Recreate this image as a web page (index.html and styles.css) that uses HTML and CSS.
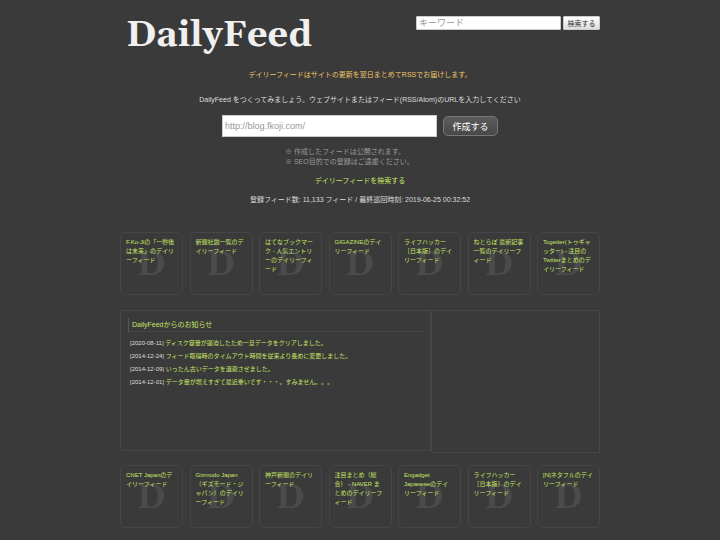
FILE: index.html
```
<!DOCTYPE html>
<html lang="ja">
<head>
    <meta charset="UTF-8">
    <meta name="viewport" content="width=device-width, initial-scale=1.0">
    <title>DailyFeed</title>
    <link rel="stylesheet" href="styles.css">
</head>
<body>
    <div class="container">
        <header class="header">
            <h1 class="logo"><a href="#">DailyFeed</a></h1>
            <form class="search-form">
                <input type="text" class="search-input" name="q" placeholder="キーワード" aria-label="キーワード">
                <button type="submit" class="search-btn">検索する</button>
            </form>
        </header>

        <main>
            <p class="tagline">デイリーフィードはサイトの更新を翌日まとめてRSSでお届けします。</p>

            <!-- Feed creation -->
            <section class="create">
                <p><label for="url">DailyFeed をつくってみましょう。ウェブサイトまたはフィード(RSS/Atom)のURLを入力してください</label></p>
                <form class="create-form">
                    <input type="text" class="url-input" id="url" name="url" placeholder="http://blog.fkoji.com/">
                    <button type="submit" class="create-btn">作成する</button>
                </form>
                <ul class="notes">
                    <li>※ 作成したフィードは公開されます。</li>
                    <li>※ SEO目的での登録はご遠慮ください。</li>
                </ul>
                <p class="info"><a href="#">デイリーフィードを検索する</a></p>
                <p class="info">登録フィード数: 11,133 フィード / 最終巡回時刻: 2019-06-25 00:32:52</p>
            </section>

            <ul class="feeds">
                <li><a href="#">F.Ko-Jiの「一秒後は未来」のデイリーフィード</a></li>
                <li><a href="#">新聞社説一覧のデイリーフィード</a></li>
                <li><a href="#">はてなブックマーク - 人気エントリーのデイリーフィード</a></li>
                <li><a href="#">GIGAZINEのデイリーフィード</a></li>
                <li><a href="#">ライフハッカー［日本版］のデイリーフィード</a></li>
                <li><a href="#">ねとらぼ 最新記事一覧のデイリーフィード</a></li>
                <li><a href="#">Togetter(トゥギャッター) - 注目のTwitterまとめのデイリーフィード</a></li>
            </ul>

            <div class="panels">
                <section class="news">
                    <h2><a href="#">DailyFeedからのお知らせ</a></h2>
                    <ul>
                        <li>[2020-08-11] <a href="#">ディスク容量が逼迫したため一旦データをクリアしました。</a></li>
                        <li>[2014-12-24] <a href="#">フィード取得時のタイムアウト時間を従来より長めに変更しました。</a></li>
                        <li>[2014-12-09] <a href="#">いったん古いデータを退避させました。</a></li>
                        <li>[2014-12-01] <a href="#">データ量が増えすぎて最近重いです・・・。すみません。。。</a></li>
                    </ul>
                </section>
                <aside class="side"></aside>
            </div>

            <ul class="feeds">
                <li><a href="#">CNET Japanのデイリーフィード</a></li>
                <li><a href="#">Gizmodo Japan（ギズモード・ジャパン）のデイリーフィード</a></li>
                <li><a href="#">神戸新聞のデイリーフィード</a></li>
                <li><a href="#">注目まとめ（総合） - NAVER まとめのデイリーフィード</a></li>
                <li><a href="#">Engadget Japaneseのデイリーフィード</a></li>
                <li><a href="#">ライフハッカー［日本版］のデイリーフィード</a></li>
                <li><a href="#">[N]ネタフルのデイリーフィード</a></li>
            </ul>
        </main>
    </div>
</body>
</html>
```
FILE: styles.css
```
:root {
    --bg-color: #3a3a3a;
    --text-color: #dddddd;
    --link-color: #c8e664;
    --border-color: #464646;
}

* {
    box-sizing: border-box;
}

body {
    margin: 0;
    background-color: var(--bg-color);
    color: var(--text-color);
    font-family: "Liberation Sans", Arial, "Noto Sans CJK JP", sans-serif;
    font-size: 7px;
    line-height: 10px;
    text-spacing-trim: space-all;
}

h1, h2, p, ul {
    margin: 0;
    padding: 0;
}

ul {
    list-style: none;
}

a {
    color: var(--link-color);
    text-decoration: none;
}

input, button {
    font-family: inherit;
    margin: 0;
}

input::placeholder {
    color: #999999;
}

.container {
    width: 67%;
    max-width: 480px;
    margin: 0 auto;
    padding-bottom: 12px;
}

/* Header */
.header {
    display: flex;
    justify-content: space-between;
    align-items: flex-start;
    padding: 16px 0 9px 6px;
}

.logo {
    font-family: Georgia, Gelasio, "Liberation Serif", serif;
    font-size: 36px;
    line-height: 40px;
}

.logo a {
    color: #f0f0f0;
}

.search-form {
    display: flex;
    gap: 2px;
}

.search-input {
    width: 145px;
    height: 14px;
    padding: 0 2px;
    border: 1px solid #cccccc;
    border-radius: 1px;
    font-size: 9px;
}

.search-btn {
    width: 37px;
    height: 14px;
    padding: 0;
    border: 1px solid #cccccc;
    border-radius: 1px;
    background: linear-gradient(#ffffff, #dddddd);
    color: #333333;
    font-size: 7px;
}

/* Feed creation */
.tagline {
    margin-bottom: 10px;
    color: #f0c468;
    line-height: 20px;
    text-align: center;
}

.create {
    text-align: center;
}

.create-form {
    display: flex;
    justify-content: center;
    align-items: center;
    gap: 6px;
    margin: 10px 0;
}

.url-input {
    width: 215px;
    height: 22px;
    padding: 0 2px;
    border: 1px solid #cccccc;
    font-size: 9px;
}

.create-btn {
    width: 55px;
    height: 20px;
    padding: 0;
    border: 1px solid #777777;
    border-radius: 5px;
    background: linear-gradient(#5c5c5c, #484848);
    color: #ffffff;
    font-size: 9px;
}

.notes {
    width: 150px;
    margin: 0 auto;
    color: #999999;
    text-align: left;
}

.info {
    margin-top: 9px;
}

/* Feed tiles */
.feeds {
    display: grid;
    grid-template-columns: repeat(auto-fill, 63px);
    justify-content: space-between;
    gap: 6px;
    margin-top: 27px;
}

.feeds li {
    display: grid;
    min-height: 63px;
    padding: 5px 6px 5px 5px;
    border: 1px solid var(--border-color);
    border-radius: 5px;
    font-size: 6px;
    line-height: 9px;
}

.feeds li::before,
.feeds a {
    grid-area: 1 / 1;
}

/* Watermark behind the feed title */
.feeds li::before {
    content: "D";
    place-self: center;
    margin-top: 3px;
    color: #4b4b4b;
    font-family: Georgia, Gelasio, "Liberation Serif", serif;
    font-size: 34px;
    font-weight: bold;
    line-height: 34px;
}

/* News */
.panels {
    display: grid;
    grid-template-columns: 311fr 169fr;
    align-items: start;
    margin: 15px 0 12px;
}

.news {
    min-height: 141px;
    padding: 7px 6px 7px 7px;
    border: 1px solid var(--border-color);
}

.side {
    min-height: 143px;
    border: 1px solid var(--border-color);
}

.news h2 {
    padding-left: 3px;
    border-left: 1px solid #55555c;
    border-bottom: 1px solid var(--border-color);
    font-size: 7px;
    font-weight: normal;
    line-height: 13px;
}

.news ul {
    padding: 5px 2px;
    font-size: 6px;
    line-height: 13px;
}

.panels + .feeds {
    margin-top: 0;
}
```
